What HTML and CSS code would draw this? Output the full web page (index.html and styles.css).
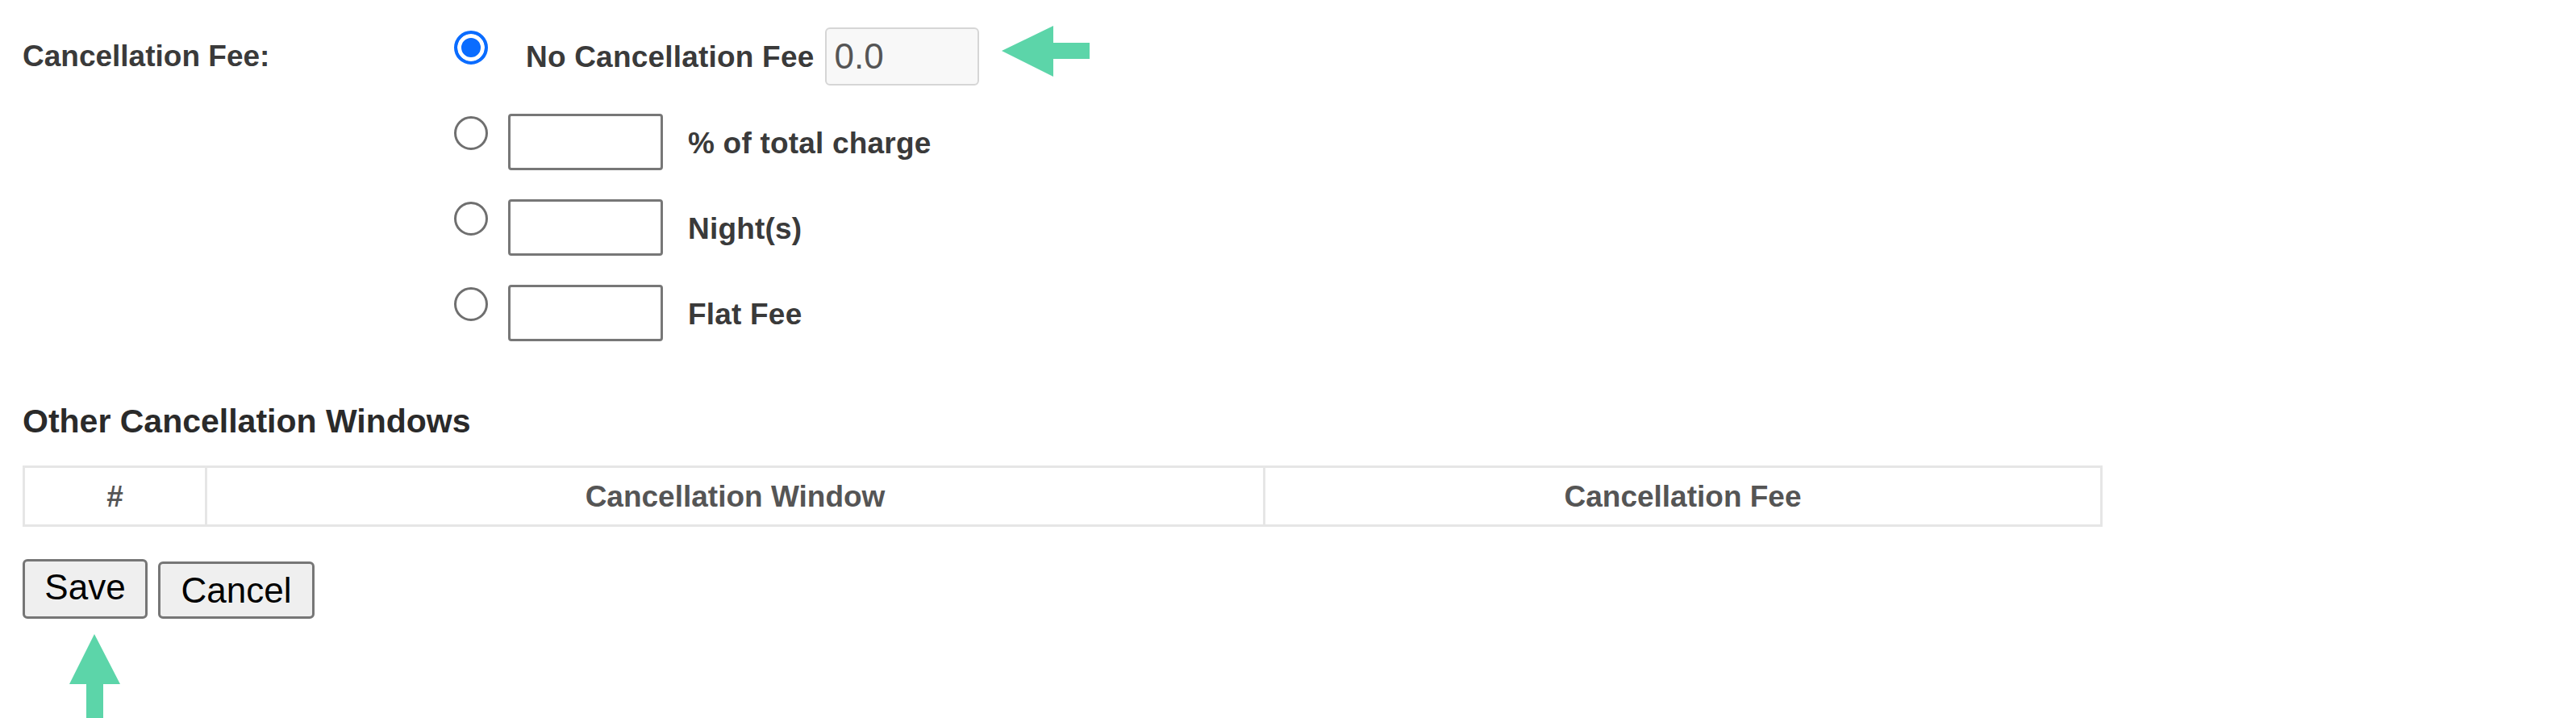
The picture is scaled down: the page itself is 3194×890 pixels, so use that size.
FILE: index.html
```html
<!DOCTYPE html>
<html>
<head>
<meta charset="utf-8">
<title>Cancellation Fee</title>
<link rel="stylesheet" href="styles.css">
</head>
<body>
<div class="page">
  <div class="fee-form">
    <div class="fee-label">Cancellation Fee:</div>
    <div class="fee-options">
      <div class="opt-row">
        <span class="radio checked"></span>
        <span class="opt-text first">No Cancellation Fee</span>
        <span class="readonly-input">0.0</span>
        <svg class="arrow-left" width="109" height="63" viewBox="0 0 109 63"><polygon points="0,31 64,0 64,21 109,21 109,41 64,41 64,63" fill="#5cd5a9"/></svg>
      </div>
      <div class="opt-row">
        <span class="radio"></span>
        <span class="empty-input"></span>
        <span class="opt-text">% of total charge</span>
      </div>
      <div class="opt-row">
        <span class="radio"></span>
        <span class="empty-input"></span>
        <span class="opt-text">Night(s)</span>
      </div>
      <div class="opt-row">
        <span class="radio"></span>
        <span class="empty-input"></span>
        <span class="opt-text">Flat Fee</span>
      </div>
    </div>
  </div>

  <h3 class="section-title">Other Cancellation Windows</h3>

  <table class="windows-table">
    <thead>
      <tr>
        <th class="c1">#</th>
        <th class="c2">Cancellation Window</th>
        <th class="c3">Cancellation Fee</th>
      </tr>
    </thead>
  </table>

  <div class="actions">
    <button class="btn save">Save</button>
    <button class="btn cancel">Cancel</button>
  </div>
  <svg class="arrow-up" width="63" height="104" viewBox="0 0 63 104"><polygon points="31,0 63,62 42,62 42,104 21,104 21,62 0,62" fill="#5cd5a9"/></svg>
</div>
</body>
</html>
```

FILE: styles.css
```css
html, body {
  margin: 0;
  padding: 0;
  background: #ffffff;
}

body {
  font-family: "Liberation Sans", Arial, sans-serif;
  color: #333333;
  width: 3194px;
  height: 890px;
  overflow: hidden;
}

.page {
  padding-left: 28px;
}

.fee-form {
  display: flex;
  padding-top: 34px;
}

.fee-label {
  width: 535px;
  flex: none;
  font-weight: bold;
  font-size: 37px;
  line-height: 72px;
  height: 72px;
  margin-top: 0;
  color: #3a3a3a;
}

.fee-options {
  display: flex;
  flex-direction: column;
  gap: 34px;
}

.opt-row {
  display: flex;
  align-items: center;
  height: 72px;
}

.radio {
  box-sizing: border-box;
  width: 42px;
  height: 42px;
  border-radius: 50%;
  border: 3px solid #6f6f6f;
  background: #fff;
  align-self: flex-start;
  margin-top: 4px;
  flex: none;
}

.radio.checked {
  border: 4px solid #0a6cff;
  background: #0a6cff;
  box-shadow: inset 0 0 0 5px #ffffff;
}

.opt-text {
  font-weight: bold;
  font-size: 37px;
  color: #3a3a3a;
  margin-left: 31px;
  margin-top: 4px;
  white-space: nowrap;
  letter-spacing: 0.2px;
}

.opt-text.first {
  margin-left: 47px;
  margin-top: 2px;
}

.readonly-input {
  box-sizing: border-box;
  width: 191px;
  height: 72px;
  margin-left: 14px;
  border: 2px solid #d6d6d6;
  border-radius: 6px;
  background: #f8f8f8;
  font-size: 44px;
  line-height: 68px;
  color: #555555;
  padding-left: 9px;
}

.empty-input {
  box-sizing: border-box;
  width: 192px;
  height: 70px;
  margin-left: 25px;
  border: 3px solid #777777;
  border-radius: 4px;
  background: #fff;
  flex: none;
}

.arrow-left {
  align-self: flex-start;
  margin-top: -2px;
  margin-left: 28px;
}

.section-title {
  margin: 75px 0 0 0;
  font-size: 41px;
  line-height: 47px;
  font-weight: bold;
  color: #2a2a2a;
}

.windows-table {
  margin-top: 31px;
  width: 2579px;
  border-collapse: separate;
  border-spacing: 0;
  border: 3px solid #e6e6e6;
  table-layout: fixed;
}

.windows-table th {
  box-sizing: border-box;
  height: 70px;
  padding: 2px 0 0 0;
  font-size: 37px;
  font-weight: bold;
  color: #555555;
  text-align: center;
  vertical-align: middle;
}

.windows-table th + th {
  border-left: 3px solid #e6e6e6;
}

.windows-table .c1 { width: 223px; }
.windows-table .c2 { width: 1312px; }
.windows-table .c3 { width: 1038px; }

.actions {
  display: flex;
  align-items: flex-end;
  gap: 13px;
  margin-top: 40px;
}

.btn {
  box-sizing: border-box;
  font-family: "Liberation Sans", Arial, sans-serif;
  font-size: 44px;
  color: #000;
  background: #efefef;
  border: 3px solid #767676;
  border-radius: 6px;
  padding: 0;
  margin: 0;
}

.btn.save {
  width: 155px;
  height: 74px;
  padding-bottom: 4px;
}

.btn.cancel {
  width: 194px;
  height: 71px;
}

.arrow-up {
  display: block;
  margin-left: 58px;
  margin-top: 19px;
}
```
